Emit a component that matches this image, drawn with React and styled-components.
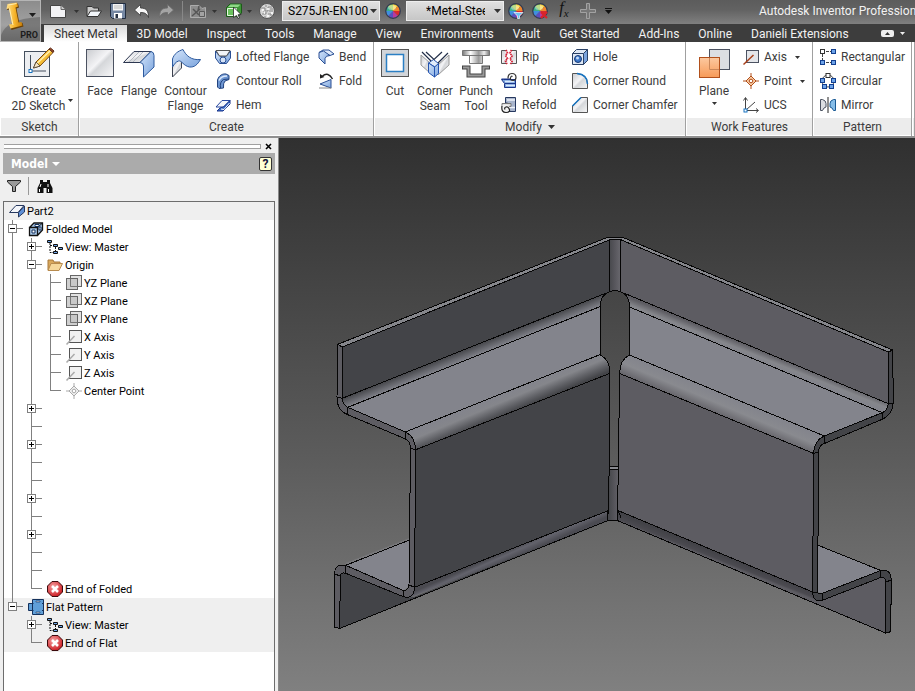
import React from 'react';
import styled, { createGlobalStyle } from 'styled-components';

const GlobalStyle = createGlobalStyle`
    * { box-sizing: border-box; }
    body {
        margin: 0;
        background: #efefef;
        font-family: Roboto, 'Open Sans', sans-serif;
        font-size: 12px;
        color: #3c3c3c;
    }
    button {
        font: inherit;
        color: inherit;
        border: 0;
        padding: 0;
        background: none;
    }
    ul { list-style: none; margin: 0; padding: 0; }
`;

/* ---------- shared svg bits ---------- */

const Svg = styled.svg`
    display: block;
    flex: none;
    width: ${p => p.$w}px;
    height: ${p => p.$h}px;
    overflow: visible;
`;

const Icon = ({ w = 16, h = w, children }) => (
    <Svg $w={w} $h={h} viewBox={`0 0 ${w} ${h}`} aria-hidden="true">{children}</Svg>
);

const Arrow = ({ w = 5, h = 3, fill = '#333' }) => (
    <Icon w={w} h={h}><path d={`M0 0H${w}L${w / 2} ${h}Z`} fill={fill} /></Icon>
);

const Gradients = () => (
    <Svg $w={0} $h={0} aria-hidden="true">
        <defs>
            <linearGradient id="steel" x1="0" y1="0" x2="1" y2="1">
                <stop offset="0" stopColor="#c9cbcf" />
                <stop offset=".45" stopColor="#f4f4f6" />
                <stop offset=".55" stopColor="#d5d7da" />
                <stop offset="1" stopColor="#f8f8f9" />
            </linearGradient>
            <linearGradient id="blue" x1="0" y1="0" x2="1" y2="1">
                <stop offset="0" stopColor="#d3e4fa" />
                <stop offset="1" stopColor="#7ba4dd" />
            </linearGradient>
            <linearGradient id="chrome" x1="0" y1="0" x2="1" y2="0">
                <stop offset="0" stopColor="#777" />
                <stop offset=".3" stopColor="#fff" />
                <stop offset=".6" stopColor="#999" />
                <stop offset=".8" stopColor="#eee" />
                <stop offset="1" stopColor="#777" />
            </linearGradient>
            <linearGradient id="orange" x1="0" y1="0" x2="0" y2="1">
                <stop offset="0" stopColor="#fcc9a0" />
                <stop offset="1" stopColor="#f79a58" />
            </linearGradient>
            <linearGradient id="gold" x1="0" y1="0" x2="1" y2="0">
                <stop offset="0" stopColor="#ffe08a" />
                <stop offset=".5" stopColor="#f7b52c" />
                <stop offset="1" stopColor="#c67c08" />
            </linearGradient>
            <radialGradient id="red" cx=".4" cy=".35" r=".7">
                <stop offset="0" stopColor="#f6a5a5" />
                <stop offset="1" stopColor="#c9151c" />
            </radialGradient>
        </defs>
    </Svg>
);

/* ---------- quick access icons ---------- */

const LogoIcon = () => (
    <Icon w={28}>
        <path d="M-1 41Q-1 18 39 16V41Z" fill="#5a5a5a" opacity=".55" />
        <path d="M7.500 4 17 2.500l1 4-2.500 1 3 15 3-.5 1 3.500-12 3.500-1.500-4 3-1L8.500 8.500 6 9Z" fill="#6b4106" />
        <path d="M6.500 3 16 1.500l1 4-2.500 1 3 15 3-.5 1 3.500-12 3-1.500-4 3-.5L8 7.500 5.500 8Z" fill="url(#gold)" />
        <path d="m7.500 4 8-1.500M8.500 7.500 12 24" fill="none" stroke="#ffefb8" />
    </Icon>
);
const NewIcon = () => (
    <Icon><path d="M.5 2.500H11l4.500 4v8H.5Z" fill="#f2f2f4" stroke="#444" /><path d="M11 2.500v4h4.500" fill="#ccc" stroke="#666" /></Icon>
);
const OpenIcon = () => (
    <Icon>
        <path d="M1 13V3.500h5l1.500 1.500h5v3" fill="#ccc" stroke="#333" />
        <path d="M1 13.500 4.500 8h11L12 13.500Z" fill="#f2f6fa" stroke="#333" />
    </Icon>
);
const SaveIcon = () => (
    <Icon>
        <path d="M.5.5h15v15h-13l-2-2Z" fill="#7688a3" stroke="#222d3f" />
        <path d="M3 1h10v6.500H3Z" fill="#f4f4f4" /><path d="M4 3h8M4 5h8" stroke="#bbb" />
        <path d="M4 10h8v5.500H4Z" fill="#fff" /><path d="M5.500 11h2.500v4H5.500Z" fill="#222d3f" />
    </Icon>
);
const UndoIcon = () => (
    <Icon><path d="M.5 7 6.500 1.500V5c6 0 8 3 8 9.500C12.500 10.500 11 9.500 6.500 9.500v3Z" fill="#f7f7f7" stroke="#333" strokeWidth=".8" /></Icon>
);
const RedoIcon = () => (
    <Icon><path d="M15.500 7 9.500 1.500V5c-6 0-8 3-8 9.500C3.500 10.500 5 9.500 9.500 9.500v3Z" fill="#a4a4a4" stroke="#6b6b6b" strokeWidth=".8" /></Icon>
);
const SelectIcon = () => (
    <Icon>
        <path d="M.5 2.500h8.500l3 3 3.500-1v10H.5Z" fill="#8c8c8c" stroke="#acacac" />
        <path d="m2 13 8-7M3 6l6 6M9 3l-1 5" fill="none" stroke="#565656" strokeWidth="1.500" />
        <path d="M9.500 8.500h5v5h-5Z" fill="#a2a2a2" stroke="#5a5a5a" />
    </Icon>
);
const CubeIcon = () => (
    <Icon>
        <path d="M.5 4.500 4 1h11.500v9L12 13.500H.5Z" fill="#3f9638" stroke="#1c5c18" />
        <path d="M4.500 1.500h10L12 4H2Z" fill="#8fd987" />
        <path d="M1.500 5.500h9v7h-9Z" fill="#6bc25e" stroke="#e8f8e5" />
        <path d="m7.500 4 7.500 7.500-3 .3 1.500 3-1.500.7-1.500-3L7.500 14.500Z" fill="#fff" stroke="#222" strokeWidth=".8" />
    </Icon>
);
const SphereIcon = () => (
    <Icon>
        <circle cx="8" cy="8" r="7.500" fill="#d6d6d6" stroke="#555" />
        <path d="M2 5h4v3h3V4h4M3 11h4v-2M10 8h4M9 11h3v2M6 13v2M7 2v2M11 6h3M4 8h1" fill="none" stroke="#888" />
        <path d="M3 7h2M8 6h2M5 10h1M12 10h2M8 13h2" stroke="#fff" strokeWidth="1.300" />
    </Icon>
);
const wedges = ['#f7d23a', '#f0852c', '#d92a2e', '#b63b9f', '#5a4fc0', '#3f8fe0', '#3bb08a', '#8cc63f'];
const point = (deg, r) => `${8 + r * Math.sin(deg * Math.PI / 180)} ${8 - r * Math.cos(deg * Math.PI / 180)}`;
const Wheel = ({ children }) => (
    <Icon>
        {wedges.map((color, i) => (
            <path key={color} d={`M8 8L${point(i * 45, 7)}A7 7 0 0 1 ${point(i * 45 + 45, 7)}Z`} fill={color} />
        ))}
        <circle cx="8" cy="8" r="7.300" fill="none" stroke="#333b52" strokeWidth="1.200" />
        <ellipse cx="7" cy="4.500" rx="4" ry="2.500" fill="#fff" opacity=".4" />
        {children}
    </Icon>
);
const PlusIcon = () => (
    <Icon><path d="M6.500.5h3v6h6v3h-6v6h-3v-6h-6v-3h6Z" fill="#777" stroke="#a2a2a2" /></Icon>
);

/* ---------- ribbon icons ---------- */

const SketchIcon = () => (
    <Icon w={32}>
        <rect x="1.500" y="4.500" width="25" height="25" fill="#eceef1" stroke="#444f5e" />
        <path d="M7.500 8v16H23" fill="none" stroke="#444f5e" />
        <rect x="6" y="22.500" width="3" height="3" fill="#fff" stroke="#1673c1" />
        <path d="M10.500 21 13 15 26 2l4 3.500L17 19Z" fill="#f5bd35" stroke="#7a4a12" />
        <path d="M14 16.500 27.500 3.500" stroke="#fff0b0" strokeWidth="1.500" />
        <path d="m26 2 1.500-1 3.500 3-1 1.500Z" fill="#9a4a2c" stroke="#5c2a17" />
        <path d="m10.500 21 2.500-6 4 4Z" fill="#f7e6c4" stroke="#333" strokeWidth=".7" />
    </Icon>
);
const FaceIcon = () => (
    <Icon w={32}><rect x="2.500" y="2.500" width="27" height="27" fill="url(#steel)" stroke="#4b5261" /></Icon>
);
const FlangeIcon = () => (
    <Icon w={32}>
        <path d="M.5 15.500 11 4.500h17l-11 11Z" fill="url(#steel)" stroke="#2d3750" />
        <path d="M28 4.500q3 .5 3 4V20L20.500 30V19q0-3-3.500-3.500Z" fill="url(#blue)" stroke="#2e5a9e" />
        <path d="M6 15 16 5M10 15 20 5" stroke="#b5bac3" />
    </Icon>
);
const ContourIcon = () => (
    <Icon w={32}>
        <path d="M2.500 14v16l9-9v-8Z" fill="url(#steel)" stroke="#3c4250" />
        <path d="M2.500 20V12C4 7 8 4 13 2.500c3 6 8 11 17.500 10-3 5-6 8-11 7.500-6-1-8-7-11-6-3 1-4 3-6 6Z" fill="url(#blue)" stroke="#2e5a9e" />
    </Icon>
);
const CutIcon = () => (
    <Icon w={32}>
        <rect x="2.500" y="2.500" width="27" height="27" fill="#d2d5d9" stroke="#555" />
        <rect x="7.500" y="7.500" width="17" height="17" fill="#fff" stroke="#2b7fc4" strokeWidth="1.500" />
    </Icon>
);
const SeamIcon = () => (
    <Icon w={32}>
        <path d="M2 8 11 16v10L2 18Z" fill="url(#steel)" stroke="#999" />
        <path d="M30 8 19 18v10l11-10Z" fill="url(#steel)" stroke="#999" />
        <path d="m9.500 16 5-3.500 5 4-3.500 3.500-6.500-4Z" fill="#e2edfb" stroke="#2453b0" />
        <path d="M9.500 16v9.500l6 4.500V20ZM15.500 20v10l4-3.500v-10Z" fill="url(#blue)" stroke="#2453b0" />
        <path d="M3 5 12 14M7 5l8 7.500 8-7.500M29 6 19 16" fill="none" stroke="#222e48" strokeWidth="1.200" />
    </Icon>
);
const PunchIcon = () => (
    <Icon w={32}>
        <path d="M2.500 3.500h27v5h-27ZM9.500 8.500h13v8h-13Z" fill="url(#chrome)" stroke="#777" />
        <path d="M2 20.500h6.500v8h15v-8H30" fill="none" stroke="#444" strokeWidth="4" />
        <path d="M3 20.500h5.500v8h15v-8H29" fill="none" stroke="#9a9a9a" strokeWidth="2" />
    </Icon>
);
const PlaneIcon = () => (
    <Icon w={32}>
        <rect x="11.500" y="2.500" width="20" height="20" fill="#dcdee2" stroke="#4b5261" />
        <rect x="1.500" y="10.500" width="20" height="20" fill="url(#orange)" stroke="#b1501c" />
        <path d="M11.500 11v11.500h9.500" fill="none" stroke="#c98658" />
    </Icon>
);

const LoftedIcon = () => (
    <Icon>
        <path d="M.5 2v7l4 5.500h7L15.500 9V2l-3 4q-4.500 4-9 0Z" fill="url(#blue)" stroke="#2a4f94" />
        <path d="M1 1.500h14L11.500 7h-7Z" fill="#f2f4f8" stroke="#555" />
        <circle cx="8" cy="11" r="3" fill="#d4e2f7" stroke="#2a4f94" />
    </Icon>
);
const RollIcon = () => (
    <Icon>
        <path d="M2.500 14V7C4 2 8 .5 11 1l3 1.500v4L10 8q-2 2-1.500 7L4 15.500Z" fill="#6d96d2" stroke="#23447f" />
        <path d="M4 7.500Q6 3 12 3" fill="none" stroke="#dce9fb" strokeWidth="1.500" />
        <path d="M5.500 15q-1-6 3-8.500L14 6" fill="none" stroke="#23447f" />
    </Icon>
);
const HemIcon = () => (
    <Icon>
        <path d="M1 10 7 3.500h8L8.500 10Z" fill="#f4f6fa" stroke="#2848a0" />
        <path d="m8.500 10 6.500-6.500V7l-7 7H2l3-3Z" fill="#3a6ecb" stroke="#1b358a" />
        <path d="m6 12 3 .5L14.500 6" fill="none" stroke="#fff" />
    </Icon>
);
const BendIcon = () => (
    <Icon>
        <path d="M1 3.500 5 1h6l5 4-4 1.500Z" fill="#dfeafa" stroke="#2a4f94" />
        <path d="M1 3.500v5.500l6 6V9.500q.5-3 5-3L5.500 2Z" fill="url(#blue)" stroke="#2a4f94" />
    </Icon>
);
const FoldIcon = () => (
    <Icon>
        <path d="M2 11 13 6.500V15Z" fill="url(#blue)" stroke="#2a4f94" />
        <path d="M1 15h12.500" stroke="#888" />
        <path d="M14.500 6C12 1 8 0 4.500 3" fill="none" stroke="#222" strokeWidth="1.400" />
        <path d="M2 5.500V1l4.500 3Z" fill="#222" />
    </Icon>
);
const RipIcon = () => (
    <Icon>
        <path d="M.5 1.500h15v13H.5Z" fill="url(#steel)" stroke="#555" />
        <path d="M5 1h5.500L9 4l2 3-2 3 2 2.500L9.500 15H5l1.500-3-2-2.500 2-3-2-3Z" fill="#fff" />
        <path d="m5 1 1.500 3-2 2.500 2 3-2 2.500L6 15M10.500 1 9 4l2 3-2 3 2 2.500L9.500 15" fill="none" stroke="#d31f35" strokeWidth="1.700" strokeDasharray="1.500 .7" />
    </Icon>
);
const UnfoldIcon = () => (
    <Icon>
        <path d="M2.500 6.500h12v8h-11v-4l-3-4Z" fill="#7ba4dd" stroke="#1b358a" />
        <path d="M.5 6h9M4 10.500h10" stroke="#1b358a" />
        <path d="M4 8.500h9M5 12.500h9" stroke="#dce9fb" strokeWidth="1.500" />
        <path d="M7 5.500Q7 .500 11 .500t4 4q0 3-3 3T9.500 5t2-1.500" fill="none" stroke="#333" strokeWidth="1.200" />
    </Icon>
);
const RefoldIcon = () => (
    <Icon>
        <path d="M4.500.500h10v14h-8V6h-2Z" fill="#a9b5cc" stroke="#26385f" />
        <path d="M6 3h8M7 10.500h7" stroke="#eef2f9" strokeWidth="1.500" />
        <path d="M1 6.500h9v3H1Z" fill="#ddd" stroke="#777" />
        <circle cx="4.500" cy="11.500" r="4" fill="#f3f3f3" />
        <path d="M1 9Q0 15.500 5 15.500t3-4q-1-2-3-1.500t-1 2.500" fill="none" stroke="#222" strokeWidth="1.200" />
    </Icon>
);
const HoleIcon = () => (
    <Icon>
        <path d="M.5 4.500 4.500.5h11v11l-4 4H.5Z" fill="#dfe8f4" stroke="#2a4166" />
        <path d="M11.500 15.500v-11l4-4v11Z" fill="#7ba4dd" stroke="#2a4166" />
        <path d="M.5 4.500h11" stroke="#2a4166" />
        <circle cx="6" cy="10" r="3.500" fill="#3d78c9" stroke="#183a77" />
        <circle cx="5.500" cy="9" r="1.500" fill="#c5dcfa" />
    </Icon>
);
const RoundIcon = () => (
    <Icon>
        <path d="M.5 15.500V.5h4.500Q15.500 1.500 15.500 11v4.500Z" fill="url(#steel)" stroke="#555" />
        <path d="M5 .5Q15.500 1.500 15.500 11" fill="none" stroke="#1673c1" strokeWidth="1.500" />
    </Icon>
);
const ChamferIcon = () => (
    <Icon>
        <path d="M.5 15.500V9L9 .5h6.500v15Z" fill="url(#steel)" stroke="#555" />
        <path d="M.5 9 9 .5" stroke="#1673c1" strokeWidth="1.500" />
    </Icon>
);
const AxisIcon = () => (
    <Icon><rect x="3.500" y="1.500" width="12" height="12" fill="#e4e6ea" stroke="#4b5261" /><path d="m.5 15.500 10-9.500" stroke="#a8401b" strokeWidth="1.500" /></Icon>
);
const PointIcon = ({ stroke = '#b1501c', fill = '#f9c9a0' }) => (
    <Icon>
        <path d="m8 3 5 5-5 5-5-5Z" fill={fill} stroke={stroke} />
        <path d="M8 0v4M8 12v4M0 8h4M12 8h4" stroke={stroke} />
        <circle cx="8" cy="8" r="1.800" fill="#fff" stroke={stroke} />
    </Icon>
);
const UcsIcon = () => (
    <Icon>
        <path d="M2.500 1v12.500H15M3 13 12 5" fill="none" stroke="#444" />
        <path d="M.5 3.500 2.500.5l2 3M13 11.500l2.500 2-2.500 2" fill="none" stroke="#444" />
        <rect x="1" y="12" width="3" height="3" fill="#fff" stroke="#1673c1" />
    </Icon>
);
const Dots = ({ spots }) => spots.map(([x, y], i) => (
    <rect key={i} x={x} y={y} width="4" height="4" fill={i ? '#6da3e8' : '#fff'} stroke={i ? '#123f8f' : '#333'} />
));
const RectangularIcon = () => (
    <Icon>
        <path d="M2.500 5v6M6 2.500h5M6 13.500h5" stroke="#444" strokeDasharray="3 1" />
        <Dots spots={[[.5, .5], [11.5, .5], [.5, 11.5], [11.5, 11.5]]} />
    </Icon>
);
const CircularIcon = () => (
    <Icon>
        <circle cx="8" cy="8" r="6" fill="none" stroke="#444" />
        <Dots spots={[[6, .5], [.5, 5.5], [11.5, 5.5], [2.5, 11.5], [9.5, 11.5]]} />
    </Icon>
);
const MirrorIcon = () => (
    <Icon>
        <path d="M.5 2.500h2q3.500 1 3.500 4V10l-2 1-1.500 2.500h-2Z" fill="#dcdee2" stroke="#4b5261" />
        <path d="M15.500 2.500h-2q-3.500 1-3.500 4V10l2 1 1.500 2.500h2Z" fill="#86bde8" stroke="#1b5a94" />
        <path d="M8 0v16" stroke="#222" />
    </Icon>
);

/* ---------- browser icons ---------- */

const PartIcon = () => (
    <Icon>
        <path d="M.5 9.500 7 2.500h8l-6 7Z" fill="#f4f6fa" stroke="#26385f" />
        <path d="M15.500 3v6L9.500 14V9.500Z" fill="#5f8fd5" stroke="#26385f" />
    </Icon>
);
const FoldedIcon = () => (
    <Icon>
        <path d="M1.500 6.500h8v8h-8ZM1.500 6.500 6 2h8.500v7l-5 5.500" fill="#a9c8ea" stroke="#111" strokeWidth="1.300" />
        <path d="M9.500 6.500 14 2.500" stroke="#111" />
        <path d="M4 9h3v3H4ZM7 3.500h4v2H7ZM11 6h2v3h-2Z" fill="#fff" stroke="#14315c" />
    </Icon>
);
const ViewIcon = () => (
    <Icon>
        <path d="M3 4v9.500H6M3 6.500H7M8.500 8v5" fill="none" stroke="#111" strokeDasharray="2 1" />
        <path d="M.5 1.500h4v2h-4ZM6.500 5.500h4v2h-4ZM11.500 8.500h4v2h-4ZM6.500 12.500h4v2h-4Z" fill="#6da3e8" stroke="#111" />
    </Icon>
);
const FolderIcon = () => (
    <Icon>
        <path d="M1 13V3h5l1 2h6v2" fill="#d9a85c" stroke="#a8783a" />
        <path d="M1 13.500 4 6.500h11.500L12 13.500Z" fill="#f6d89b" stroke="#b88b4e" />
    </Icon>
);
const TreePlaneIcon = () => (
    <Icon>
        <rect x="4.500" y=".5" width="11" height="11" fill="#e2e2e2" stroke="#666" />
        <rect x=".5" y="3.500" width="11" height="11" fill="#bfbfbf" fillOpacity=".75" stroke="#666" />
        <path d="M4.500 4v7.500h7" fill="none" stroke="#777" />
    </Icon>
);
const TreeAxisIcon = () => (
    <Icon><rect x="3.500" y="1.500" width="12" height="12" fill="#f1f1f1" stroke="#555" /><path d="M.5 15.500 8.500 7" stroke="#aaa" strokeWidth="1.500" /></Icon>
);
const EndIcon = () => (
    <Icon>
        <path d="M5 .5h6L15.500 5v6L11 15.500H5L.5 11V5Z" fill="url(#red)" stroke="#3b0a0c" />
        <path d="m5 5 6 6M11 5l-6 6" stroke="#fff" strokeWidth="2.500" />
    </Icon>
);
const FlatIcon = () => (
    <Icon>
        <path d="M4.500.5h11v15h-11ZM.5 4.500h4v7h-4Z" fill="#5f9fd8" stroke="#14315c" />
        <path d="M4 4.500h1.500M14 4.500h1.500M4 11.500h1.500M14 11.500h1.500" stroke="#14315c" />
        <path d="M8 3h4v-1H8ZM8 13h4v1H8Z" fill="#fff" stroke="#14315c" strokeWidth=".6" />
    </Icon>
);
const FunnelIcon = () => (
    <Icon w={14} h={12}>
        <path d="M.5.5h13v1.500L8.500 6.500v5h-3v-5L.5 2Z" fill="#9a9a9a" stroke="#222" />
    </Icon>
);
const BinocularsIcon = () => (
    <Icon w={16} h={14}>
        <path d="M3 1h3v2h4V1h3v3l2.500 5v5h-6V9h-3v5h-6V9L3 4Z" fill="#111" />
        <path d="M2.500 10v3M4 5 3 8M11 5v3M11.500 10v3" stroke="#fff" />
    </Icon>
);

/* ---------- header ---------- */

const Page = styled.div`
    display: flex;
    flex-direction: column;
    height: 100vh;
    overflow: hidden;
`;
const Header = styled.header`
    display: flex;
    flex: none;
    background: #3d3d3d;
`;
const AppButton = styled.button`
    flex: none;
    display: grid;
    grid-template-columns: 28px 1fr;
    grid-template-rows: 28px 1fr;
    align-items: center;
    width: 41px;
    height: 42px;
    border: 1px solid #b5b5b5;
    background: linear-gradient(#8c8c8c, #a2a2a2 60%, #7c7c7c);
    overflow: hidden;
    svg { position: relative; }
`;
const Pro = styled.span`
    position: relative;
    grid-column: 1 / 3;
    padding-right: 2px;
    font-size: 9px;
    line-height: 11px;
    font-weight: bold;
    text-align: right;
    color: #1c1c1c;
`;
const HeaderRows = styled.div`
    flex: 1;
    min-width: 0;
`;
const QuickBar = styled.div`
    display: flex;
    align-items: center;
    height: 24px;
    padding: 0 0 2px 9px;
    background: linear-gradient(#5c5c5c, #626262 40%, #808080);
`;
const QuickButton = styled.button`
    flex: none;
    display: flex;
    justify-content: center;
    align-items: center;
    width: ${p => p.$w || 24}px;
    height: 20px;
`;
const Rule = styled.span`
    flex: none;
    width: 1px;
    height: ${p => p.$h}px;
    margin: ${p => p.$m || '0'};
    background: ${p => p.$color || '#999'};
`;
const Combo = styled.label`
    flex: none;
    display: flex;
    align-items: center;
    width: 98px;
    height: 20px;
    padding-right: 2px;
    border: 1px solid #eee;
    background: linear-gradient(#e0e0e0, #c6c6c6);
`;
const ComboSelect = styled.select`
    appearance: none;
    width: ${p => p.$indent ? 78 : 87}px;
    margin-right: ${p => p.$indent ? 9 : 0}px;
    height: 18px;
    padding: 0 0 0 ${p => p.$indent ? 19 : 5}px;
    border: 0;
    background: none;
    font: inherit;
    color: #000;
`;
const Fx = styled.span`
    font-family: 'Liberation Serif', serif;
    font-style: italic;
    font-size: 16px;
    line-height: 18px;
    color: #111;
    sub { font-size: 11px; }
`;
const Title = styled.span`
    flex: 1;
    min-width: 0;
    padding-left: 143px;
    overflow: hidden;
    white-space: nowrap;
    color: #f2f2f2;
`;
const Tabs = styled.nav`
    display: flex;
    align-items: flex-end;
    height: 18px;
    padding-left: 3px;
`;
const Tab = styled.button`
    flex: none;
    height: 17px;
    padding: 0 9px 0 10px;
    line-height: 16px;
    color: ${p => p.$active ? '#333' : '#f2f2f2'};
    background: ${p => p.$active ? 'linear-gradient(#d9d9d9, #fff)' : 'none'};
`;
const Minimize = styled.button`
    display: flex;
    align-items: center;
    gap: 6px;
    height: 17px;
    margin-left: auto;
    padding-right: 10px;
`;

const tabs = ['Sheet Metal', '3D Model', 'Inspect', 'Tools', 'Manage', 'View', 'Environments', 'Vault',
    'Get Started', 'Add-Ins', 'Online', 'Danieli Extensions'];

const AppHeader = () => (
    <Header>
        <AppButton aria-label="Application menu">
            <LogoIcon />
            <Arrow w={7} h={4} fill="#1c1c1c" />
            <Pro>PRO</Pro>
        </AppButton>
        <HeaderRows>
            <QuickBar>
                <QuickButton aria-label="New" $w={16}><NewIcon /></QuickButton>
                <QuickButton aria-label="New options" $w={20}><Arrow /></QuickButton>
                <QuickButton aria-label="Open" $w={16}><OpenIcon /></QuickButton>
                <QuickButton aria-label="Save" $w={32}><SaveIcon /></QuickButton>
                <QuickButton aria-label="Undo" $w={16}><UndoIcon /></QuickButton>
                <QuickButton aria-label="Redo" $w={32}><RedoIcon /></QuickButton>
                <Rule $h={20} $m="0 7px 0 0" $color="#888" />
                <QuickButton aria-label="Select" $w={16}><SelectIcon /></QuickButton>
                <QuickButton aria-label="Select options" $w={16}><Arrow /></QuickButton>
                <QuickButton aria-label="Return"><CubeIcon /></QuickButton>
                <QuickButton aria-label="Return options" $w={6}><Arrow /></QuickButton>
                <QuickButton aria-label="Materials" $w={30}><SphereIcon /></QuickButton>
                <Combo>
                    <ComboSelect aria-label="Material"><option>S275JR-EN100</option></ComboSelect>
                    <Arrow w={7} h={4} />
                </Combo>
                <QuickButton aria-label="Appearance" $w={26}><Wheel /></QuickButton>
                <Combo>
                    <ComboSelect aria-label="Appearance override" $indent><option>*Metal-Steel</option></ComboSelect>
                    <Arrow w={7} h={4} />
                </Combo>
                <QuickButton aria-label="Adjust"><Wheel><path d="M6 9.500h9L11.500 13v2.500H9.500V13Z" fill="#6bc5f2" stroke="#fff" strokeWidth=".7" /></Wheel></QuickButton>
                <QuickButton aria-label="Clear"><Wheel><path d="m9 9 6 6M15 9l-6 6" stroke="#d8232a" strokeWidth="2.200" /></Wheel></QuickButton>
                <QuickButton aria-label="Parameters"><Fx>f<sub>x</sub></Fx></QuickButton>
                <QuickButton aria-label="Add"><PlusIcon /></QuickButton>
                <QuickButton aria-label="Customize" $w={16}>
                    <Icon w={7} h={6}><path d="M0 .5h7" stroke="#111" /><path d="M0 2h7L3.500 6Z" fill="#111" /></Icon>
                </QuickButton>
                <Title>Autodesk Inventor Professional</Title>
            </QuickBar>
            <Tabs>
                {tabs.map((name, i) => <Tab key={name} $active={i === 0}>{name}</Tab>)}
                <Minimize aria-label="Minimize ribbon">
                    <Icon w={13} h={7}><rect width="13" height="7" rx="2" fill="#eee" /><path d="M4 5h5L6.500 2Z" fill="#333" /></Icon>
                    <Arrow fill="#eee" />
                </Minimize>
            </Tabs>
        </HeaderRows>
    </Header>
);

/* ---------- ribbon ---------- */

const Ribbon = styled.section`
    flex: none;
    display: flex;
    background: #fff;
    border-bottom: 2px solid #909090;
`;
const PanelBox = styled.div`
    flex: ${p => p.$w ? 'none' : '1'};
    width: ${p => p.$w ? p.$w + 'px' : 'auto'};
    overflow: hidden;
    border-right: 1px solid #a0a0a0;
`;
const PanelBody = styled.div`
    display: flex;
    height: 76px;
    padding: 3px 0 0 ${p => p.$pad || 3}px;
`;
const PanelLabel = styled.div`
    display: flex;
    justify-content: center;
    align-items: center;
    gap: 6px;
    height: 18px;
    margin-left: 1px;
    background: #ececec;
    border-bottom: 1px solid #fff;
`;
const BigButton = styled.button`
    flex: none;
    display: flex;
    flex-direction: column;
    align-items: center;
    width: ${p => p.$w}px;
    height: 70px;
    padding-top: 2px;
    line-height: 15px;
    text-align: center;
    white-space: pre;
    svg + span { margin-top: 5px; }
    span + svg { margin-top: 3px; }
`;
const ArrowButton = styled.button`
    display: flex;
    align-items: flex-end;
    height: 57px;
`;
const Column = styled.div`
    flex: none;
    width: ${p => p.$w}px;
    margin-left: ${p => p.$gap || 0}px;
`;
const SmallButton = styled.button`
    display: flex;
    align-items: center;
    gap: 5px;
    height: 24px;
    white-space: nowrap;
    span + svg { margin-left: 3px; }
`;

const Panel = ({ title, width, pad, arrow, children }) => (
    <PanelBox $w={width}>
        <PanelBody $pad={pad}>{children}</PanelBody>
        <PanelLabel>{title}{arrow && <Arrow w={7} h={4} />}</PanelLabel>
    </PanelBox>
);
const Big = ({ icon, label, width, arrow }) => (
    <BigButton $w={width}>{icon}<span>{label}</span>{arrow && <Arrow />}</BigButton>
);
const Small = ({ icon, label, arrow }) => (
    <SmallButton>{icon}<span>{label}</span>{arrow && <Arrow />}</SmallButton>
);

const SheetMetalRibbon = () => (
    <Ribbon>
        <Panel title="Sketch" width={79} pad={9}>
            <Big icon={<SketchIcon />} label={'Create\n2D Sketch'} width={59} />
            <ArrowButton aria-label="Sketch options"><Arrow /></ArrowButton>
        </Panel>
        <Panel title="Create" width={295}>
            <Big icon={<FaceIcon />} label="Face" width={36} />
            <Big icon={<FlangeIcon />} label="Flange" width={42} />
            <Big icon={<ContourIcon />} label={'Contour\nFlange'} width={51} />
            <Column $w={103} $gap={4}>
                <Small icon={<LoftedIcon />} label="Lofted Flange" />
                <Small icon={<RollIcon />} label="Contour Roll" />
                <Small icon={<HemIcon />} label="Hem" />
            </Column>
            <Column $w={50}>
                <Small icon={<BendIcon />} label="Bend" />
                <Small icon={<FoldIcon />} label="Fold" />
            </Column>
        </Panel>
        <Panel title="Modify" width={312} arrow>
            <Big icon={<CutIcon />} label="Cut" width={36} />
            <Big icon={<SeamIcon />} label={'Corner\nSeam'} width={44} />
            <Big icon={<PunchIcon />} label={'Punch\nTool'} width={38} />
            <Column $w={71} $gap={6}>
                <Small icon={<RipIcon />} label="Rip" />
                <Small icon={<UnfoldIcon />} label="Unfold" />
                <Small icon={<RefoldIcon />} label="Refold" />
            </Column>
            <Column $w={110}>
                <Small icon={<HoleIcon />} label="Hole" />
                <Small icon={<RoundIcon />} label="Corner Round" />
                <Small icon={<ChamferIcon />} label="Corner Chamfer" />
            </Column>
        </Panel>
        <Panel title="Work Features" width={127}>
            <Big icon={<PlaneIcon />} label="Plane" width={50} arrow />
            <Column $w={64} $gap={4}>
                <Small icon={<AxisIcon />} label="Axis" arrow />
                <Small icon={<PointIcon />} label="Point" arrow />
                <Small icon={<UcsIcon />} label="UCS" />
            </Column>
        </Panel>
        <Panel title="Pattern" width={99} pad={7}>
            <Column $w={90}>
                <Small icon={<RectangularIcon />} label="Rectangular" />
                <Small icon={<CircularIcon />} label="Circular" />
                <Small icon={<MirrorIcon />} label="Mirror" />
            </Column>
        </Panel>
        <Panel title="" />
    </Ribbon>
);

/* ---------- model browser ---------- */

const Main = styled.main`
    flex: 1;
    display: flex;
    min-height: 0;
`;
const Sidebar = styled.aside`
    flex: none;
    display: flex;
    flex-direction: column;
    width: 279px;
    padding: 3px 3px 0 3px;
    border-right: 1px solid #8a8a8a;
    background: #efefef;
    font-size: 11px;
    color: #000;
`;
const GripRow = styled.div`
    display: flex;
    align-items: center;
    justify-content: space-between;
    height: 12px;
    padding-bottom: 2px;
`;
const Grip = styled.div`
    flex: 1;
    height: 5px;
    margin: 0 4px 0 1px;
    border: 1px solid #a0a0a0;
    border-left: 0;
    background: #fff;
`;
const CloseButton = styled.button`
    width: 8px;
    height: 8px;
    margin-right: 2px;
`;
const BrowserTitle = styled.div`
    display: flex;
    align-items: center;
    justify-content: space-between;
    height: 21px;
    padding: 0 3px 0 8px;
    background: #ababab;
`;
const BrowserMenu = styled.button`
    display: flex;
    align-items: center;
    gap: 4px;
    font-family: 'DejaVu Sans Condensed', 'DejaVu Sans', sans-serif;
    font-size: 12px;
    font-weight: bold;
    color: #fff;
`;
const HelpButton = styled.button`
    width: 13px;
    height: 14px;
    border: 1px solid #333;
    border-radius: 2px;
    background: #ffffd5;
    font-size: 12px;
    line-height: 12px;
    font-weight: bold;
    color: #14143c;
`;
const BrowserTools = styled.div`
    display: flex;
    align-items: center;
    height: 27px;
    padding: 0 0 3px 4px;
`;
const Tree = styled.ul`
    flex: 1;
    overflow: hidden;
    border: 1px solid #6d6d6d;
    border-bottom: 0;
    background: #fff;
`;
const TreeRow = styled.li`
    display: flex;
    align-items: center;
    height: 18px;
    padding-left: ${p => p.$root ? 5 : 0}px;
    background: ${p => p.$shade ? '#efefef' : 'none'};
    white-space: nowrap;
`;

const ink = 'linear-gradient(#808080, #808080)';
const branches = {
    pipe: `${ink} 8px 0 / 1px 100% no-repeat`,
    tee: `${ink} 8px 0 / 1px 100% no-repeat, ${ink} 8px 8px / 11px 1px no-repeat`,
    end: `${ink} 8px 0 / 1px 9px no-repeat, ${ink} 8px 8px / 11px 1px no-repeat`,
    none: 'none',
};
const Branch = styled.span`
    flex: none;
    display: flex;
    align-items: flex-start;
    width: 19px;
    height: 18px;
    padding: 4px 0 0 4px;
    background: ${p => branches[p.$kind]};
`;
const Expander = styled.button`
    width: 9px;
    height: 9px;
    border: 1px solid #808080;
    background:
        linear-gradient(#000, #000) 1px 3px / 5px 1px no-repeat,
        linear-gradient(#000, #000) 3px 1px / 1px ${p => p.$open ? 0 : 5}px no-repeat,
        #fff;
`;
const NodeButton = styled.button`
    display: flex;
    align-items: center;
    gap: 2px;
    margin-left: ${p => p.$root ? 0 : 5}px;
`;

// b lists the branch cells left to right, x is the expander in the last one (+ or -)
const nodes = [
    { b: [], icon: <PartIcon />, text: 'Part2', shade: true },
    { b: ['tee'], x: '-', icon: <FoldedIcon />, text: 'Folded Model' },
    { b: ['pipe', 'tee'], x: '+', icon: <ViewIcon />, text: 'View: Master' },
    { b: ['pipe', 'tee'], x: '-', icon: <FolderIcon />, text: 'Origin' },
    { b: ['pipe', 'pipe', 'tee'], icon: <TreePlaneIcon />, text: 'YZ Plane' },
    { b: ['pipe', 'pipe', 'tee'], icon: <TreePlaneIcon />, text: 'XZ Plane' },
    { b: ['pipe', 'pipe', 'tee'], icon: <TreePlaneIcon />, text: 'XY Plane' },
    { b: ['pipe', 'pipe', 'tee'], icon: <TreeAxisIcon />, text: 'X Axis' },
    { b: ['pipe', 'pipe', 'tee'], icon: <TreeAxisIcon />, text: 'Y Axis' },
    { b: ['pipe', 'pipe', 'tee'], icon: <TreeAxisIcon />, text: 'Z Axis' },
    { b: ['pipe', 'pipe', 'end'], icon: <PointIcon stroke="#aaa" fill="#eee" />, text: 'Center Point' },
    { b: ['pipe', 'tee'], x: '+' },
    { b: ['pipe', 'tee'] },
    { b: ['pipe', 'tee'], x: '+' },
    { b: ['pipe', 'tee'] },
    { b: ['pipe', 'tee'] },
    { b: ['pipe', 'tee'], x: '+' },
    { b: ['pipe', 'tee'] },
    { b: ['pipe', 'tee'], x: '+' },
    { b: ['pipe', 'tee'] },
    { b: ['pipe', 'tee'] },
    { b: ['pipe', 'end'], icon: <EndIcon />, text: 'End of Folded' },
    { b: ['end'], x: '-', icon: <FlatIcon />, text: 'Flat Pattern', shade: true },
    { b: ['none', 'tee'], x: '+', icon: <ViewIcon />, text: 'View: Master', shade: true },
    { b: ['none', 'end'], icon: <EndIcon />, text: 'End of Flat', shade: true },
];

const Browser = () => (
    <Sidebar>
        <GripRow>
            <Grip />
            <CloseButton aria-label="Close">
                <Icon w={7} h={7}><path d="m1 1 5 5M6 1 1 6" stroke="#000" strokeWidth="1.600" /></Icon>
            </CloseButton>
        </GripRow>
        <BrowserTitle>
            <BrowserMenu>Model <Arrow w={8} h={4} fill="#fff" /></BrowserMenu>
            <HelpButton>?</HelpButton>
        </BrowserTitle>
        <BrowserTools>
            <button aria-label="Filter"><FunnelIcon /></button>
            <Rule $h={18} $m="0 8px 0 7px" />
            <button aria-label="Find"><BinocularsIcon /></button>
        </BrowserTools>
        <Tree>
            {nodes.map((n, i) => (
                <TreeRow key={i} $shade={n.shade} $root={!n.b.length}>
                    {n.b.map((kind, j) => (
                        <Branch key={j} $kind={kind}>
                            {n.x && j === n.b.length - 1 &&
                                <Expander $open={n.x === '-'} aria-label={n.x === '-' ? 'Collapse' : 'Expand'} />}
                        </Branch>
                    ))}
                    {n.text && <NodeButton $root={!n.b.length}>{n.icon}<span>{n.text}</span></NodeButton>}
                </TreeRow>
            ))}
        </Tree>
    </Sidebar>
);

/* ---------- 3d view ---------- */

const Viewport = styled.section`
    flex: 1;
    min-width: 0;
    background: linear-gradient(#303030, #5c5c5c 58%, #808080);
`;
const Scene = styled.svg`
    display: block;
    width: 100%;
    height: 100%;
    .edge {
        fill: none;
        stroke: #050505;
        stroke-width: 1px;
        shape-rendering: crispEdges;
    }
`;

const Shade = ({ id, from, to, stops }) => (
    <linearGradient id={id} gradientUnits="userSpaceOnUse" x1={from[0]} y1={from[1]} x2={to[0]} y2={to[1]}>
        {stops.map(([offset, color]) => <stop key={offset} offset={offset} stopColor={color} />)}
    </linearGradient>
);

const SheetPart = () => (
    <Scene viewBox="279 138 636 553" role="img" aria-label="Folded sheet metal part">
        <defs>
            <Shade id="bendTopL" from={[475, 345]} to={[479, 355]} stops={[[0, '#434448'], [1, '#83848c']]} />
            <Shade id="bendLowL" from={[500, 395]} to={[508, 414]} stops={[[0, '#83848c'], [.35, '#85868b'], [.7, '#606166'], [1, '#434448']]} />
            <Shade id="bendTopR" from={[755, 348]} to={[751, 358]} stops={[[0, '#5d5c62'], [.6, '#85868b'], [1, '#83848c']]} />
            <Shade id="bendLowR" from={[720, 393]} to={[712, 412]} stops={[[0, '#83848c'], [.5, '#898a8f'], [1, '#66656b']]} />
            <Shade id="hemL" from={[510, 549]} to={[514, 558]} stops={[[0, '#4a4a50'], [.4, '#63636c'], [1, '#4b4b52']]} />
            <Shade id="hemR" from={[715, 552]} to={[711, 562]} stops={[[0, '#424247'], [.5, '#4b4a50'], [.8, '#64636a'], [1, '#5d5c62']]} />
            <Shade id="corner" from={[609, 0]} to={[621, 0]} stops={[[0, '#46474b'], [.5, '#58575d'], [1, '#6a696f']]} />
        </defs>

        {/* lower flanges behind the front faces */}
        <path d="M340 576Q341 572 346 573L403 596.500L414 597L608 518V521L340 628.500Z" fill="#434448" />
        <path d="M617 518L819 601L881 577.500Q886 577 886 582V633L617 521Z" fill="#5d5c62" />
        <path d="M345.700 565.300L409.500 540V586L403.300 590.500Z" fill="#83848c" />
        <path d="M817.500 545L880.700 570.500L822.300 593.300L817.500 592Z" fill="#83848c" />
        <path d="M345.700 563L409.500 538V540L345.700 565Z" fill="#85868b" opacity=".5" />
        <path d="M414.500 587L609 510.300L608 520.500L409 598Z" fill="url(#hemL)" />
        <path d="M618 510.500L813 592L819 602L617.300 521Z" fill="url(#hemR)" />

        {/* left wing */}
        <path d="M337.700 344.300L607.700 237.300L622.700 237.300L620.700 240H610L342.300 347Z" fill="#85868b" />
        <path d="M342.300 347L610 240L609.500 291.500L605 293.500L342.300 398.300Z" fill="#434448" />
        <path d="M342.300 398.300L607 292.500Q600.500 298 600.300 306.500L347.700 407.300Q343 405 342.300 398.300Z" fill="url(#bendTopL)" />
        <path d="M347.700 407.300L600.300 306.500V354.500L405.300 432Z" fill="#83848c" />
        <path d="M405.300 432L600.300 354.500Q610 360 610 373.300L415.700 449.700Q415 436 405.300 432Z" fill="url(#bendLowL)" />
        <path d="M415.700 449.700L610 373.300L609 510.300L414.500 587.300Z" fill="#434448" />
        <path d="M337.700 344.300L342.300 347V398.300Q343 405 347.700 407.300L405.300 432Q415 436 415.700 449.700L414.500 587.300Q414 597 406 597.300L403 596.500L345.700 573.300Q340.500 572 340.300 576L339.700 628.500L334.300 627L334.500 574Q335 565 341 565L345.700 565.300L403.300 590.500Q409 590 409 585L410.500 448.500Q410.500 441 405 438.700L347.700 414.700Q337 411 337 397Z" fill="#5d5c62" />

        {/* right wing */}
        <path d="M620.700 240L622.700 237.300L892.700 350L888.300 352Z" fill="#85868b" />
        <path d="M620.700 240L888.300 352V403.700L625 293.500L620.700 291.500Z" fill="#5d5c62" />
        <path d="M625 293L888.300 403.700Q887 411 882.300 412.700L629.500 307Q629 298 625 293Z" fill="url(#bendTopR)" />
        <path d="M629.500 307L882.300 412.700L824.300 436L629.500 355Z" fill="#83848c" />
        <path d="M629.500 355L824.300 436Q814.500 440 813.500 453.300L619.700 373.500Q620 360 629.500 355Z" fill="url(#bendLowR)" />
        <path d="M619.500 373.500L813.500 453.300L812.700 592L618 510.500Z" fill="#5d5c62" />
        <path d="M892.700 350L888.300 352V403.700Q887 411 882.300 412.700L824.300 436Q814.500 440 813.500 453.300L812.700 592Q813 600 819 601L822.300 600.300L880.700 577.500Q886 577 886 582L885.700 633L890.700 631.700L891.300 580Q891 571 885 570.500H880.700L822.300 593.300Q818 594 817.700 592L818.500 452.500Q819 445 824.300 443.500L882.300 419.300Q892 415 893.300 403Z" fill="#434448" />

        {/* mitre corner */}
        <path d="M610 240H620.700V291.500L615 290.500L609.500 291.500Z" fill="url(#corner)" />
        <path d="M609 466.500H618.500V469.500H609Z" fill="#898a8f" />
        <path d="M609 469.500H618.500L617.300 520.500H608Z" fill="url(#corner)" />

        <g className="edge">
            <path d="M337.700 344.300L607.700 237.300H622.700L892.700 350M342.300 347L610 239.700H620.700L888.300 352M337.700 344.300L342.300 347M892.700 350L888.300 352" />
            <path d="M610 240L609.300 291.500M620.700 240V291.500" />
            <path d="M600.500 355V305Q601 292 615 290.500Q629 292 629.300 305V355Q619.700 360 619.700 373L618.300 466L617.500 520.500M600.500 355Q610 360 610 373L609.300 466L607.700 520.500H617.500" />
            <path d="M609 466.500H618.500M609 469.500H618.500" />
            <path d="M342.300 398.300L605 293.500M347.700 407.300L600.300 306.500M405.300 432L600.300 354.500M415.700 449.700L610 373.300M414.500 587.300L609 510.300L607 517.500M339.700 628.500L608 520.500" />
            <path d="M888.300 403.700L625 293.500M882.300 412.700L629.500 307M824.300 436L629.500 355M813.300 453.300L619.700 373.500M812.700 592L618 510.500L621 517.500M885.700 633L617.300 520.500" />
            <path d="M409.500 540L345.700 565.300M817.500 545L880.700 570.500" />
            <path d="M337.700 344.300L337 397Q337 411 347.700 414.700L405 438.700Q410.500 441 410.500 448.500L409 585Q409 590 403.300 590.500L345.700 565.300H341Q335 565 334.500 574L334.300 627L339.700 628.500L340.300 576Q340.500 572 345.700 573.300L403 596.500Q414 600 414.500 587.300L415.700 449.700Q415 436 405.300 432L347.700 407.300Q343 405 342.300 398.300V347" />
            <path d="M337 397L342.300 398.300M347.700 407.300V414.700M405.300 432V438.700M410.500 448.500L415.700 449.700M409 585L414.500 587.300M403.300 590.500V596.500M345.700 565.300V573.300M334.500 574L340.300 576" />
            <path d="M892.700 350L893.300 403Q892 415 882.300 419.300L824.300 443.500Q819 445 818.500 452.500L817.700 592Q818 594 822.300 593.300L880.700 570.500H885Q891 571 891.300 580L890.700 631.700L885.700 633V582Q886 577 880.700 577.500L822.300 600.300Q813 603 812.700 592L813.500 453.300Q814.500 440 824.300 436L882.300 412.700Q887 411 888.300 403.700V352" />
            <path d="M893.300 403L888.300 403.700M882.300 412.700V419.300M824.300 436V443.500M818.500 452.500L813.500 453.300M817.700 592H812.700M822.300 593.300V600.300M880.700 570.500V577.500M891.300 580L885.700 582" />
        </g>
    </Scene>
);

const App = () => (
    <Page>
        <GlobalStyle />
        <AppHeader />
        <SheetMetalRibbon />
        <Main>
            <Browser />
            <Viewport><SheetPart /></Viewport>
        </Main>
        <Gradients />
    </Page>
);

export default App;
